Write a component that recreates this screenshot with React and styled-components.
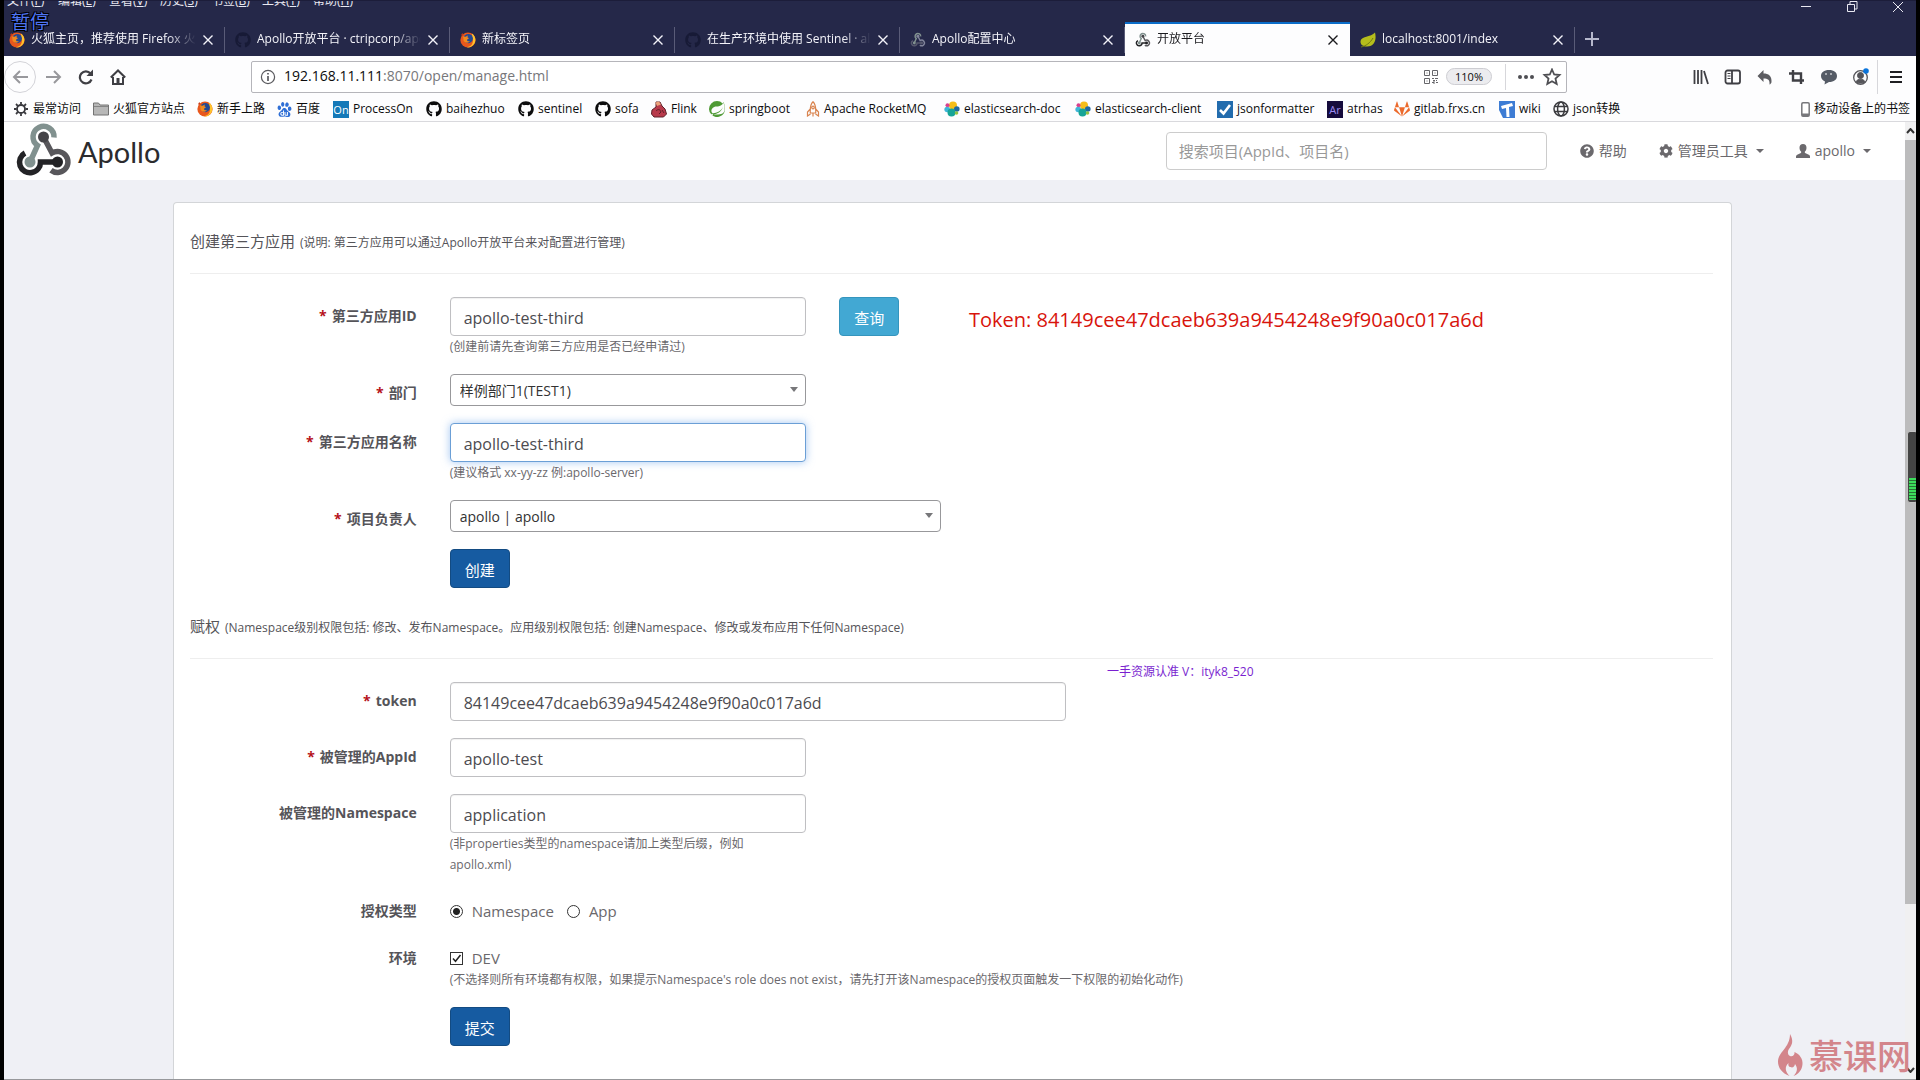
import React from "react";
import styled, { createGlobalStyle, css } from "styled-components";
import {
  FaGithub,
  FaCog,
  FaQuestionCircle,
  FaGitlab,
} from "react-icons/fa";
import { SiSpring, SiBaidu } from "react-icons/si";

const GlobalStyle = createGlobalStyle`
  * {
    box-sizing: border-box;
  }
  body {
    margin: 0;
    background: #000;
    font-family: "Open Sans", "Noto Sans CJK SC", sans-serif;
    color: #555459;
  }
  button, input, select {
    font-family: inherit;
    margin: 0;
  }
  button {
    border: 0;
    padding: 0;
    background: none;
    color: inherit;
  }
  a {
    color: inherit;
    text-decoration: none;
  }
`;

/* ---------- browser window ---------- */

const Screen = styled.div`
  position: relative;
  display: flex;
  flex-direction: column;
  min-height: 100vh;
  border: solid #000;
  border-width: 0 4px;
  background: #eff0f5;
  overflow: hidden;
`;

const TitleBar = styled.div`
  display: flex;
  justify-content: space-between;
  height: 22px;
  background: #252849;
  border-top: 1px solid #1c1d3a;
  overflow: hidden;
`;

const MenuBar = styled.nav`
  display: flex;
  align-items: flex-end;
  height: 8px;
  padding-left: 3px;
`;

const MenuItem = styled.button`
  width: 51px;
  font-size: 12px;
  line-height: 16px;
  text-align: left;
  color: #e9e9f2;
`;

const WindowButtons = styled.div`
  display: flex;
  align-items: flex-start;
  gap: 30px;
  padding-right: 10px;
  color: #e9e9f2;

  button {
    width: 16px;
    height: 12px;
  }
  svg {
    display: block;
  }
`;

const TabStrip = styled.div`
  display: flex;
  height: 34px;
  padding-right: 8px;
  background: #252849;
`;

const Tab = styled.div`
  display: flex;
  align-items: center;
  gap: 6px;
  width: ${(p) => (p.$first ? "221px" : "225px")};
  padding: ${(p) => (p.$first ? "0 11px 0 5px" : "0 11px 0 10px")};
  color: #f4f4fa;
  border-top: 2px solid transparent;
  background: linear-gradient(#5a5c78, #5a5c78) right 3px / 1px 26px no-repeat;

  ${(p) =>
    p.$active &&
    css`
      background: #fdfdfe;
      color: #1a1a1e;
      border-top-color: #0a6dc9;
    `}

  svg {
    flex: none;
  }
`;

const TabTitle = styled.button`
  flex: 1;
  min-width: 0;
  font-size: 12px;
  line-height: 20px;
  padding-bottom: 2px;
  text-align: left;
  white-space: nowrap;
  overflow: hidden;
  mask-image: linear-gradient(to left, transparent, #000 28px);
`;

const TabClose = styled.button`
  width: 12px;
  height: 12px;

  svg {
    display: block;
  }
`;

const NewTab = styled.button`
  display: grid;
  place-items: center;
  width: 34px;
  color: #b6b8cc;
`;

const Toolbar = styled.div`
  display: flex;
  align-items: center;
  height: 41px;
  padding-right: 6px;
  background: #fdfdfe;
  color: #3f3f44;
`;

const NavButtons = styled.div`
  display: flex;
  align-items: center;
  width: 247px;
`;

const ToolButton = styled.button`
  display: grid;
  place-items: center;
  width: 32px;
  height: 32px;
  border-radius: 50%;
  border: 1px solid ${(p) => (p.$ring ? "#d3d3d8" : "transparent")};
  color: ${(p) => (p.$dim ? "#98989c" : "inherit")};
  margin-right: ${(p) => (p.$ring ? "2px" : "0")};
`;

const UrlBar = styled.div`
  display: flex;
  align-items: center;
  flex: 1;
  max-width: 1316px;
  height: 32px;
  padding: 0 4px 0 8px;
  gap: 8px;
  border: 1px solid #b5b5ba;
  border-radius: 2px;
  background: #fff;
`;

const UrlText = styled.div`
  flex: 1;
  padding-bottom: 1px;
  font-size: 14px;
  line-height: 20px;
  color: #77777b;

  b {
    font-weight: 400;
    color: #0c0c0d;
  }
`;

const Zoom = styled.button`
  width: 46px;
  height: 17px;
  border: 1px solid #cdcdd2;
  border-radius: 9px;
  background: #ececef;
  font-size: 11px;
  line-height: 14px;
  color: #0c0c0d;
`;

const Divider = styled.span`
  width: 1px;
  height: 34px;
  background: #d7d7db;
`;

const ToolbarRight = styled.div`
  display: flex;
  align-items: center;
  margin-left: auto;
`;

const Bookmarks = styled.nav`
  display: flex;
  align-items: center;
  height: 25px;
  padding: 0 6px 0 9px;
  border-bottom: 1px solid #d9d9dd;
  background: #fdfdfe;
`;

const Bookmark = styled.a`
  display: flex;
  align-items: center;
  gap: 4px;
  flex: none;
  width: ${(p) => (p.$w ? p.$w + "px" : "auto")};
  margin-left: ${(p) => (p.$end ? "auto" : "0")};
  font-size: 12px;
  line-height: 20px;
  white-space: nowrap;
  color: #0c0c0d;

  svg {
    flex: none;
  }
`;

const Tile = styled.span`
  display: grid;
  place-items: center;
  width: 16px;
  height: 17px;
  flex: none;
  background: ${(p) => p.$bg};
  color: ${(p) => p.$fg};
  font-size: 11px;
  line-height: 17px;
`;

/* ---------- page ---------- */

const Viewport = styled.div`
  display: flex;
  flex: 1;
  border-bottom: 1px solid #97989b;
`;

const Page = styled.div`
  flex: 1;
  display: flex;
  flex-direction: column;
`;

const Header = styled.header`
  display: flex;
  align-items: center;
  height: 58px;
  padding: 0 34px 0 10px;
  background: #fff;
`;

const Brand = styled.a`
  display: flex;
  align-items: center;
  gap: 4px;
  margin-right: auto;
  font-family: Lato, "Open Sans", sans-serif;
  font-size: 29px;
  line-height: 36px;
  color: #2b2b2e;

  span {
    padding-top: 2px;
  }
`;

const Search = styled.input`
  width: 381px;
  height: 38px;
  margin-right: 33px;
  padding: 0 12px;
  border: 1px solid #ccc;
  border-radius: 4px;
  font-size: 15px;
  color: #555459;

  &::placeholder {
    color: #999;
    opacity: 1;
  }
`;

const NavLink = styled.a`
  display: flex;
  align-items: center;
  gap: 5px;
  margin-left: ${(p) => (p.$first ? "0" : "32px")};
  font-size: 14px;
  line-height: 22px;
  color: #6b696d;
`;

const Caret = styled.span`
  margin-left: 3px;
  border: 4px solid transparent;
  border-top-color: currentColor;
  border-bottom: 0;
`;

const ScrollBar = styled.div`
  display: flex;
  flex-direction: column;
  align-items: center;
  width: 11px;
  background: #f0f0f1;
  color: #333;

  svg {
    flex: none;
    margin: 6px 0;
  }
`;

const Thumb = styled.div`
  flex: 765 0 0;
  width: 100%;
  background: #bcbcbd;
`;

const ThumbRest = styled.div`
  flex: 157 0 0;
`;

const Panel = styled.main`
  flex: 1;
  margin: 22px 173px 0 169px;
  padding: 0 16px;
  border: 1px solid #d3d5d8;
  border-bottom: 0;
  border-radius: 4px 4px 0 0;
  background: #fff;
`;

const SectionHead = styled.h2`
  margin: 0 2px 23px 0;
  padding: 27px 0 19px;
  border-bottom: 1px solid #eee;
  font-size: 15px;
  font-weight: 400;
  line-height: 23px;
  color: #555459;

  small {
    margin-left: 5px;
    font-size: 12px;
  }
`;

const Row = styled.div`
  display: grid;
  grid-template-columns: repeat(12, minmax(0, 1fr));
  column-gap: 33px;
  margin-bottom: 17px;

  &:last-child {
    margin-bottom: 0;
  }
`;

const labelText = css`
  grid-column: 1 / span 2;
  padding-top: 8px;
  font-size: 14px;
  font-weight: 700;
  line-height: 22px;
  text-align: right;
`;

const Label = styled.label`
  ${labelText}
`;

const GroupLabel = styled.span`
  ${labelText}
`;

const Star = styled.span`
  margin-right: 5px;
  color: #b5121b;
`;

const Cell = styled.div`
  grid-column: ${(p) => p.$from || 3} / span ${(p) => p.$span};
`;

const TextInput = styled.input`
  display: block;
  width: 100%;
  height: 39px;
  padding: 2px 13px 0;
  border: 1px solid #bfbfc2;
  border-radius: 4px;
  background: #fff;
  box-shadow: inset 0 1px 1px rgba(0, 0, 0, 0.06);
  font-size: 16px;
  color: #4c4b50;
  outline: 0;

  ${(p) =>
    p.$focused &&
    css`
      border-color: #6b9fd6;
      box-shadow: 0 0 8px rgba(102, 160, 233, 0.6);
    `}
`;

const SelectWrap = styled.div`
  position: relative;
  width: ${(p) => (p.$wide ? "491px" : "100%")};

  svg {
    position: absolute;
    right: 8px;
    top: 13px;
    pointer-events: none;
  }
`;

const Select = styled.select`
  appearance: none;
  display: block;
  width: 100%;
  height: 32px;
  padding: 0 9px;
  border: 1px solid #98989b;
  border-radius: 4px;
  background: #fff;
  font-size: 14px;
  color: #333;
`;

const Hint = styled.small`
  display: block;
  font-size: 12px;
  line-height: 21px;
  color: #6a686c;
`;

const Button = styled.button`
  display: block;
  height: 39px;
  padding: 2px 14px 0;
  border: 1px solid ${(p) => (p.$info ? "#3595bd" : "#134b82")};
  border-radius: 4px;
  background: ${(p) => (p.$info ? "#42a8d3" : "#165ba1")};
  font-size: 15px;
  line-height: 22px;
  color: #fff;
  white-space: nowrap;
`;

const TokenText = styled.p`
  margin: 0;
  padding-top: 8px;
  font-size: 20px;
  line-height: 30px;
  color: #d8140c;
  white-space: nowrap;
`;

const Options = styled.div`
  display: flex;
  gap: 13px;
  padding-top: 8px;
`;

const Option = styled.label`
  display: flex;
  align-items: center;
  gap: 9px;
  font-size: 15px;
  line-height: 22px;
  color: #6a686c;
`;

const Radio = styled.input`
  appearance: none;
  width: 13px;
  height: 13px;
  border: 1px solid #333;
  border-radius: 50%;

  &:checked {
    background: radial-gradient(#222 0 3px, #fff 4px);
  }
`;

const CheckWrap = styled.span`
  position: relative;
  display: flex;

  svg {
    position: absolute;
    inset: 0;
    pointer-events: none;
  }
`;

const Check = styled.input`
  appearance: none;
  width: 13px;
  height: 13px;
  border: 1px solid #333;
`;

/* ---------- things floating over the window ---------- */

const Paused = styled.div`
  position: absolute;
  left: 7px;
  top: 8px;
  font-size: 19px;
  line-height: 28px;
  color: #4f74f2;
  text-shadow: 1px 1px 0 #000, -1px -1px 0 #000, 1px -1px 0 #000, -1px 1px 0 #000;
`;

const Promo = styled.div`
  position: absolute;
  left: 1103px;
  top: 664px;
  font-size: 12px;
  line-height: 16px;
  color: #7a1fd0;
`;

const Battery = styled.div`
  position: absolute;
  right: -2px;
  top: 431px;
  display: flex;
  align-items: flex-end;
  width: 11px;
  height: 72px;
  padding: 2px 1px;
  border: 1px solid #c4c4c4;
  border-radius: 3px;
  background: #444;

  span {
    flex: 1;
    height: 22px;
    background: repeating-linear-gradient(#3ddc5c 0 2px, #2b7038 2px 3px);
  }
`;

const Watermark = styled.div`
  position: absolute;
  right: 5px;
  bottom: 2px;
  display: flex;
  align-items: center;
  gap: 6px;
  font-family: "Noto Sans CJK SC", sans-serif;
  font-size: 34px;
  line-height: 46px;
  font-weight: 500;
  color: #d3858b;
`;

/* ---------- drawings ---------- */

const CloseIcon = () => (
  <svg width="12" height="12" viewBox="0 0 12 12" stroke="currentColor" strokeWidth="1.4">
    <path d="M1.5 1.5l9 9M10.5 1.5l-9 9" />
  </svg>
);

const FirefoxIcon = () => (
  <svg width="16" height="16" viewBox="0 0 16 16">
    <circle cx="8" cy="8" r="7.6" fill="#e8571c" />
    <path d="M12 1.5c3 2 4.3 6 2.7 9.5-1.5 3.2-5 5-8.2 4.3 4-.5 6.5-3 6.5-6.8 0-2.5-1.5-3.5-1-7z" fill="#ffc32b" />
    <circle cx="8.3" cy="6.6" r="4.6" fill="#234a94" />
    <path d="M3 4.5l2.5.2L8 3.5l-.6 1.8 1.6.9-1.8 1.2c-.6 1.6.8 2.2 2.6 1.6-.8 2.4-5 2.2-6.3-.6z" fill="#f28b1e" />
    <path d="M1 3.5C1.3 2.5 2 1.5 2.5 1l1 2.5z" fill="#c93a12" />
  </svg>
);

const ApolloMark = ({ size = 60, dim }) => (
  <svg width={size} height={size} viewBox="0 0 60 58" fill="none" strokeWidth="5.5">
    <path d="M43.5 40H26.5A10.5 10.5 0 1 1 11 31" stroke={dim ? "#55576c" : "#232326"} />
    <path d="M40 15.5A10.5 10.5 0 1 0 23.5 23.5L16 40" stroke="#81918f" />
    <path d="M29.5 15L38 31A10.5 10.5 0 1 1 37 48.3" stroke={dim ? "#81849a" : "#58575b"} />
    <circle cx="29.5" cy="15" r="5.5" fill={dim ? "#81849a" : "#454448"} />
    <circle cx="16" cy="40" r="5.5" fill="#81918f" />
    <circle cx="43.5" cy="40" r="5.5" fill={dim ? "#55576c" : "#232326"} />
  </svg>
);

const LeafIcon = () => (
  <svg width="16" height="16" viewBox="0 0 16 16">
    <path d="M15 .5c1.5 6 .5 14-8 14C2 14.5.5 12 .5 9.500.5 4 11 5.500 15 .5z" fill="#b5bd1c" />
    <path d="M1 15c5-1 9-4 12-9" stroke="#717a12" fill="none" />
  </svg>
);

const GearIcon = () => (
  <svg width="16" height="16" viewBox="0 0 16 16" fill="none" stroke="#38383d" strokeWidth="1.8">
    <circle cx="8" cy="8" r="4" />
    <path d="M8 1v2.5M8 12.5V15M1 8h2.5M12.5 8H15M3 3l1.8 1.8M11.2 11.2L13 13M13 3l-1.8 1.8M4.8 11.2L3 13" />
  </svg>
);

const FolderIcon = () => (
  <svg width="16" height="16" viewBox="0 0 16 16">
    <path d="M.5 14V2h5l1.5 2h8.5v10z" fill="#b7b7b7" stroke="#737373" />
    <path d="M1 5.5h14" stroke="#858585" />
  </svg>
);

const FlinkIcon = () => (
  <svg width="16" height="17" viewBox="0 0 16 17">
    <path d="M5 1h4l2 4 3 3 1.500 5-3 3H3L.5 13 1 9l4-3z" fill="#b83a4b" stroke="#5c2029" />
    <path d="M4.5 1.5L8 .5l2 3-4 1.5z" fill="#eba27b" />
    <path d="M5 10c2-2 4-2 5 1l-2 2M11 9l2 3" stroke="#602029" fill="none" />
  </svg>
);

const RocketIcon = () => (
  <svg width="14" height="16" viewBox="0 0 14 16" fill="none" stroke="#d9844f" strokeWidth="1.2">
    <path d="M7 .8C4.5 3 4 6 4.3 12h5.400C10 6 9.500 3 7 .8zM4.300 8L1.500 11v4l3-2M9.700 8l2.800 3v4l-3-2M7 12v3.500" />
    <circle cx="7" cy="6.5" r="1.3" />
  </svg>
);

const ElasticIcon = () => (
  <svg width="16" height="16" viewBox="0 0 16 16">
    <circle cx="9" cy="4.5" r="4" fill="#f5bd19" />
    <circle cx="3.5" cy="4.3" r="2" fill="#d9418c" />
    <circle cx="3.2" cy="8.5" r="2.8" fill="#3fb5d8" />
    <circle cx="12.8" cy="8" r="2.8" fill="#1d69a3" />
    <circle cx="7.5" cy="11.5" r="4" fill="#16a497" />
    <circle cx="12.5" cy="12" r="1.8" fill="#8fc343" />
  </svg>
);

const CheckTile = () => (
  <svg width="16" height="17" viewBox="0 0 16 17">
    <path d="M0 0h16v17H0z" fill="#216bad" />
    <path d="M3 9l3.5 3.5L13 4" fill="none" stroke="#fff" strokeWidth="2.6" />
  </svg>
);

const WikiIcon = () => (
  <svg width="16" height="17" viewBox="0 0 16 17">
    <path d="M0 0h16v17H0z" fill="#3d7cd4" />
    <path d="M2 5l11-3 1 3-4 1 .5 10h-3L7 7 3 8zM0 9l4 8H0z" fill="#fff" />
  </svg>
);

const GlobeIcon = () => (
  <svg width="16" height="16" viewBox="0 0 16 16" fill="none" stroke="#3b3b3f" strokeWidth="1.5">
    <circle cx="8" cy="8" r="7" />
    <ellipse cx="8" cy="8" rx="3.4" ry="7" />
    <path d="M1.5 5.5h13M1.5 10.5h13" />
  </svg>
);

const PhoneIcon = () => (
  <svg width="9" height="15" viewBox="0 0 9 15">
    <rect x=".8" y=".8" width="7.4" height="13.4" rx="1.2" fill="#fff" stroke="#77777b" strokeWidth="1.5" />
    <path d="M1 11.5h7V14H1z" fill="#77777b" />
  </svg>
);

const UserIcon = () => (
  <svg width="14" height="14" viewBox="0 0 14 14" fill="currentColor">
    <path d="M7 0c2.3 0 3.5 1.5 3.5 3.7 0 1.8-.8 3.3-1.7 4.1-.2.7.1 1.1.8 1.4l3.2 1.5c.7.4 1.2 1 1.2 1.8V14H0v-1.5c0-.8.5-1.4 1.2-1.8l3.2-1.5c.7-.3 1-.7.8-1.4-.9-.8-1.7-2.3-1.7-4.1C3.5 1.5 4.7 0 7 0z" />
  </svg>
);

const DropArrow = () => (
  <svg width="8" height="5" viewBox="0 0 8 5">
    <path d="M0 0h8L4 5z" fill="#77777a" />
  </svg>
);

const FlameIcon = () => (
  <svg width="25" height="42" viewBox="0 0 25 42" fill="currentColor">
    <path d="M12 0c4 7 2 11-1 15-2 3-1 6 1 7 2.5 1 5-1 4.5-4 5 2 8.5 7 8 12-.4 6-4 10-9 12 4-4 4.5-8 1.5-12-.5 3-2.5 4-4.5 3-2 0-2.5-2-2-4-4 4-3.5 8 1 13C4 39 0 34 0 27.500 0 18 12 14 12 0z" />
  </svg>
);

const tabs = [
  { title: "火狐主页，推荐使用 Firefox 火狐浏览器", icon: <FirefoxIcon /> },
  { title: "Apollo开放平台 · ctripcorp/apollo Wiki", icon: <FaGithub size={16} color="#171a36" /> },
  { title: "新标签页", icon: <FirefoxIcon /> },
  { title: "在生产环境中使用 Sentinel · alibaba", icon: <FaGithub size={16} color="#171a36" /> },
  { title: "Apollo配置中心", icon: <ApolloMark size={16} dim /> },
  { title: "开放平台", icon: <ApolloMark size={16} />, active: true },
  { title: "localhost:8001/index", icon: <LeafIcon /> },
];

const bookmarks = [
  { name: "最常访问", w: 80, icon: <GearIcon /> },
  { name: "火狐官方站点", w: 104, icon: <FolderIcon /> },
  { name: "新手上路", w: 80, icon: <FirefoxIcon /> },
  { name: "百度", w: 56, icon: <SiBaidu size={15} color="#2f6fd6" /> },
  { name: "ProcessOn", w: 93, icon: <Tile $bg="#1579b8" $fg="#fff">On</Tile> },
  { name: "baihezhuo", w: 92, icon: <FaGithub size={16} /> },
  { name: "sentinel", w: 77, icon: <FaGithub size={16} /> },
  { name: "sofa", w: 56, icon: <FaGithub size={16} /> },
  { name: "Flink", w: 58, icon: <FlinkIcon /> },
  { name: "springboot", w: 97, icon: <SiSpring size={16} color="#4f9a35" /> },
  { name: "Apache RocketMQ", w: 138, icon: <RocketIcon /> },
  { name: "elasticsearch-doc", w: 131, icon: <ElasticIcon /> },
  { name: "elasticsearch-client", w: 142, icon: <ElasticIcon /> },
  { name: "jsonformatter", w: 110, icon: <CheckTile /> },
  { name: "atrhas", w: 67, icon: <Tile $bg="#150b3c" $fg="#9c8cf0">Ar</Tile> },
  { name: "gitlab.frxs.cn", w: 105, icon: <FaGitlab size={16} color="#ec6a2c" /> },
  { name: "wiki", w: 54, icon: <WikiIcon /> },
  { name: "json转换", w: 70, icon: <GlobeIcon /> },
];

const menus = ["文件(F)", "编辑(E)", "查看(V)", "历史(S)", "书签(B)", "工具(T)", "帮助(H)"];

const Browser = () => (
  <>
    <TitleBar>
      <MenuBar>
        {menus.map((m) => (
          <MenuItem key={m}>
            {m.slice(0, 3)}
            <u>{m[3]}</u>)
          </MenuItem>
        ))}
      </MenuBar>
      <WindowButtons>
        <button aria-label="最小化">
          <svg width="16" height="12" stroke="currentColor"><path d="M3 5.5h10" /></svg>
        </button>
        <button aria-label="还原">
          <svg width="16" height="12" fill="none" stroke="currentColor">
            <path d="M3.5 3.5h7v7h-7zM6 3V.5h7V8h-2" />
          </svg>
        </button>
        <button aria-label="关闭">
          <svg width="16" height="12" stroke="currentColor"><path d="M3 1l10 10M13 1L3 11" /></svg>
        </button>
      </WindowButtons>
    </TitleBar>
    <TabStrip>
      {tabs.map((t, i) => (
        <Tab key={t.title} $first={i === 0} $active={t.active}>
          {t.icon}
          <TabTitle>{t.title}</TabTitle>
          <TabClose aria-label="关闭标签页"><CloseIcon /></TabClose>
        </Tab>
      ))}
      <NewTab aria-label="新标签">
        <svg width="14" height="14" stroke="currentColor" strokeWidth="2"><path d="M7 0v14M0 7h14" /></svg>
      </NewTab>
    </TabStrip>
    <Toolbar>
      <NavButtons>
        <ToolButton $ring $dim aria-label="后退">
          <svg width="16" height="16" fill="none" stroke="currentColor" strokeWidth="2"><path d="M16 8H2M8 2L2 8l6 6" /></svg>
        </ToolButton>
        <ToolButton $dim aria-label="前进">
          <svg width="16" height="16" fill="none" stroke="currentColor" strokeWidth="2"><path d="M0 8h14M8 2l6 6-6 6" /></svg>
        </ToolButton>
        <ToolButton aria-label="刷新">
          <svg width="16" height="16" fill="none" stroke="currentColor" strokeWidth="2.2">
            <path d="M13.5 10.5A6 6 0 1 1 12.5 4.5" />
            <path d="M15 .5V7H8.5z" fill="currentColor" stroke="none" />
          </svg>
        </ToolButton>
        <ToolButton aria-label="主页">
          <svg width="16" height="16" fill="none" stroke="currentColor" strokeWidth="2">
            <path d="M.8 8.5L8 1.5l7.2 7M3 8v7h10V8" />
            <path d="M6.5 9h3v6h-3z" fill="currentColor" stroke="none" />
          </svg>
        </ToolButton>
      </NavButtons>
      <UrlBar>
        <svg width="16" height="16" fill="none" stroke="#5a5a5e" strokeWidth="1.2">
          <circle cx="8" cy="8" r="6.6" />
          <path d="M8 7v5M8 4v1.6" strokeWidth="1.7" />
        </svg>
        <UrlText><b>192.168.11.111</b>:8070/open/manage.html</UrlText>
        <svg width="14" height="14" fill="none" stroke="#66666a">
          <path d="M.5.5h5v5h-5zM8.5.5h5v5h-5zM.5 8.5h5v5h-5zM2.5 3h1M10.5 3h1M2.5 11h1" />
          <path d="M8 8.5h2m1 0h3M9 10.5h2m1 0h1M8 12.5h2m2 0h2M10 11v3" />
        </svg>
        <Zoom>110%</Zoom>
        <svg width="10" height="26"><path d="M5.5 0v26" stroke="#d7d7db" /></svg>
        <svg width="16" height="16" fill="#4f4f53">
          <circle cx="2" cy="8" r="2" /><circle cx="8" cy="8" r="2" /><circle cx="14" cy="8" r="2" />
        </svg>
        <svg width="20" height="18" viewBox="0 0 18 18" fill="none" stroke="#4f4f53" strokeWidth="1.8">
          <path d="M9 1.5l2.2 5 5.3.5-4 3.6 1.2 5.400L9 13.2 4.300 16l1.200-5.400L1.500 7l5.300-.5z" />
        </svg>
      </UrlBar>
      <ToolbarRight>
        <ToolButton aria-label="书库">
          <svg width="16" height="16" stroke="currentColor" strokeWidth="1.8"><path d="M1.5 1v14M5 1v14M8.5 1v14M11 2l4 13" /></svg>
        </ToolButton>
        <ToolButton aria-label="侧栏">
          <svg width="18" height="16" fill="none" stroke="currentColor" strokeWidth="1.8">
            <rect x="1.5" y="1.5" width="14.5" height="13" rx="2" />
            <path d="M8 1.5v13" />
            <path d="M3.5 4.5h3m-3 2.5h3m-3 2.5h3" strokeWidth="1" />
          </svg>
        </ToolButton>
        <ToolButton aria-label="撤销">
          <svg width="16" height="16" fill="#5c5c61">
            <path d="M6.5 1v3.5c5 0 8.5 2.5 8 8.5-.2 1.3-1 2.2-2 2.5.5-4.5-1.5-6-6-6V13L.5 7z" />
          </svg>
        </ToolButton>
        <ToolButton aria-label="截图">
          <svg width="16" height="16" fill="none" stroke="currentColor" strokeWidth="2.4"><path d="M4 1v10.5h11M0 4.5h12V15" /></svg>
        </ToolButton>
        <ToolButton aria-label="聊天">
          <svg width="18" height="16">
            <path d="M9 1c5 0 8 2.5 8 6s-3 6-8 6l-4.5 2.5.5-3C2.5 11.5 1 9.500 1 7c0-3.500 3-6 8-6z" fill="#555b66" />
            <path d="M6 4v2M11 4v2" stroke="#fff" />
          </svg>
        </ToolButton>
        <ToolButton aria-label="账户">
          <svg width="18" height="18" fill="none" stroke="#55555a">
            <circle cx="8.5" cy="9.5" r="6.8" strokeWidth="1.3" />
            <circle cx="8.5" cy="7.5" r="3" fill="#55555a" />
            <path d="M4 13.5c2-3 7-3 9 0-2 2.3-7 2.3-9 0z" fill="#55555a" />
            <circle cx="14" cy="3" r="2.8" fill="#0a74db" stroke="none" />
          </svg>
        </ToolButton>
        <Divider />
        <ToolButton aria-label="菜单">
          <svg width="16" height="14" stroke="#1f1f22" strokeWidth="2"><path d="M4 2h12M4 7h12M4 12h12" /></svg>
        </ToolButton>
      </ToolbarRight>
    </Toolbar>
    <Bookmarks>
      {bookmarks.map((b) => (
        <Bookmark key={b.name} href="#" $w={b.w}>
          {b.icon}
          {b.name}
        </Bookmark>
      ))}
      <Bookmark href="#" $end>
        <PhoneIcon />
        移动设备上的书签
      </Bookmark>
    </Bookmarks>
  </>
);

const CreateForm = () => (
  <section>
    <SectionHead>
      创建第三方应用<small>(说明: 第三方应用可以通过Apollo开放平台来对配置进行管理)</small>
    </SectionHead>
    <Row>
      <Label htmlFor="consumerId"><Star>*</Star>第三方应用ID</Label>
      <Cell $span={3}>
        <TextInput id="consumerId" defaultValue="apollo-test-third" />
        <Hint>(创建前请先查询第三方应用是否已经申请过)</Hint>
      </Cell>
      <Cell $from={6} $span={1}>
        <Button $info>查询</Button>
      </Cell>
      <Cell $from={7} $span={5}>
        <TokenText>Token: 84149cee47dcaeb639a9454248e9f90a0c017a6d</TokenText>
      </Cell>
    </Row>
    <Row>
      <Label htmlFor="org"><Star>*</Star>部门</Label>
      <Cell $span={3}>
        <SelectWrap>
          <Select id="org"><option>样例部门1(TEST1)</option></Select>
          <DropArrow />
        </SelectWrap>
      </Cell>
    </Row>
    <Row>
      <Label htmlFor="consumerName"><Star>*</Star>第三方应用名称</Label>
      <Cell $span={3}>
        <TextInput id="consumerName" $focused defaultValue="apollo-test-third" />
        <Hint>(建议格式 xx-yy-zz 例:apollo-server)</Hint>
      </Cell>
    </Row>
    <Row>
      <Label htmlFor="owner"><Star>*</Star>项目负责人</Label>
      <Cell $span={5}>
        <SelectWrap $wide>
          <Select id="owner"><option>apollo | apollo</option></Select>
          <DropArrow />
        </SelectWrap>
      </Cell>
    </Row>
    <Row>
      <Cell $span={3}><Button>创建</Button></Cell>
    </Row>
  </section>
);

const GrantForm = () => (
  <section>
    <SectionHead>
      赋权<small>(Namespace级别权限包括: 修改、发布Namespace。应用级别权限包括: 创建Namespace、修改或发布应用下任何Namespace)</small>
    </SectionHead>
    <Row>
      <Label htmlFor="token"><Star>*</Star>token</Label>
      <Cell $span={5}>
        <TextInput id="token" defaultValue="84149cee47dcaeb639a9454248e9f90a0c017a6d" />
      </Cell>
    </Row>
    <Row>
      <Label htmlFor="appId"><Star>*</Star>被管理的AppId</Label>
      <Cell $span={3}>
        <TextInput id="appId" defaultValue="apollo-test" />
      </Cell>
    </Row>
    <Row>
      <Label htmlFor="namespace">被管理的Namespace</Label>
      <Cell $span={3}>
        <TextInput id="namespace" defaultValue="application" />
        <Hint>(非properties类型的namespace请加上类型后缀，例如 apollo.xml)</Hint>
      </Cell>
    </Row>
    <Row>
      <GroupLabel>授权类型</GroupLabel>
      <Cell $span={5}>
        <Options>
          <Option><Radio type="radio" name="type" defaultChecked />Namespace</Option>
          <Option><Radio type="radio" name="type" />App</Option>
        </Options>
      </Cell>
    </Row>
    <Row>
      <GroupLabel>环境</GroupLabel>
      <Cell $span={10}>
        <Options>
          <Option>
            <CheckWrap>
              <Check type="checkbox" defaultChecked />
              <svg width="13" height="13" fill="none" stroke="#222" strokeWidth="1.5"><path d="M3 6.5l2.5 2.8L10.5 3" /></svg>
            </CheckWrap>
            DEV
          </Option>
        </Options>
        <Hint>(不选择则所有环境都有权限，如果提示Namespace's role does not exist，请先打开该Namespace的授权页面触发一下权限的初始化动作)</Hint>
      </Cell>
    </Row>
    <Row>
      <Cell $span={3}><Button>提交</Button></Cell>
    </Row>
  </section>
);

const App = () => {
  return (
    <Screen>
      <GlobalStyle />
      <Browser />
      <Viewport>
        <Page>
          <Header>
            <Brand href="#"><ApolloMark /><span>Apollo</span></Brand>
            <Search aria-label="搜索项目" placeholder="搜索项目(AppId、项目名)" />
            <NavLink href="#" $first><FaQuestionCircle size={14} />帮助</NavLink>
            <NavLink href="#"><FaCog size={14} />管理员工具<Caret /></NavLink>
            <NavLink href="#"><UserIcon />apollo<Caret /></NavLink>
          </Header>
          <Panel>
            <CreateForm />
            <GrantForm />
          </Panel>
        </Page>
        <ScrollBar>
          <svg width="9" height="6" fill="none" stroke="currentColor" strokeWidth="2"><path d="M1 5l3.5-4L8 5" /></svg>
          <Thumb />
          <ThumbRest />
          <svg width="9" height="6" fill="none" stroke="currentColor" strokeWidth="2"><path d="M1 1l3.5 4L8 1" /></svg>
        </ScrollBar>
      </Viewport>
      <Paused>暂停</Paused>
      <Promo>一手资源认准 V：ityk8_520</Promo>
      <Battery><span /></Battery>
      <Watermark><FlameIcon />慕课网</Watermark>
    </Screen>
  );
};

export default App;
